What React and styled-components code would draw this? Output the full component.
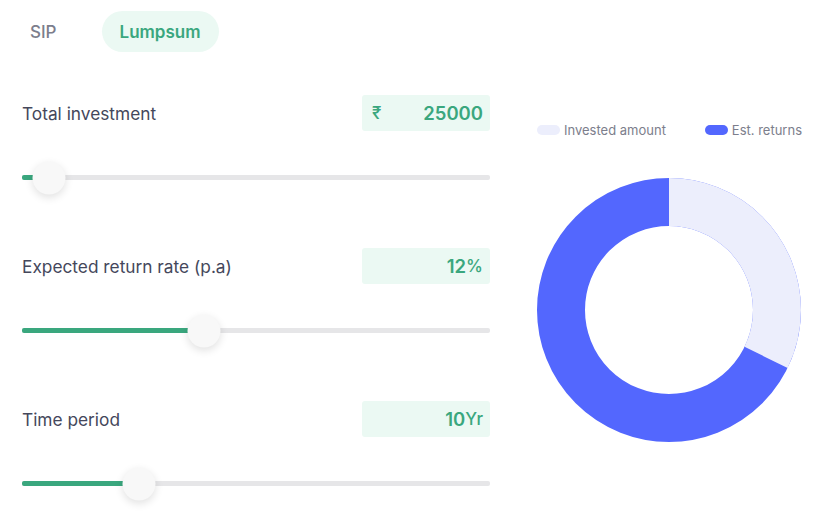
import React from 'react';
import styled, { createGlobalStyle } from 'styled-components';

const GlobalStyle = createGlobalStyle`
    body{
        margin: 0;
        background: #ffffff;
        font-family: Inter, "Open Sans", sans-serif;
    }
`;

const Page = styled.div`
    display: flex;
    gap: 47px;
    padding: 11px 0 0 22px;
    width: 820px;
    height: 531px;
    box-sizing: border-box;
`;

const LeftCol = styled.div`
    width: 468px;
    display: flex;
    flex-direction: column;
`;

const Tabs = styled.div`
    display: flex;
    align-items: center;
    gap: 37px;
    margin-bottom: 43px;
`;

const Tab = styled.button`
    height: 41px;
    border: none;
    border-radius: 21px;
    padding: 0 ${(p) => (p.active ? '18px' : '8px')};
    background: ${(p) => (p.active ? '#ebf9f3' : 'transparent')};
    color: ${(p) => (p.active ? '#3aa77e' : '#7c7e8c')};
    font-family: Inter, "Open Sans", sans-serif;
    font-size: 17px;
    font-weight: ${(p) => (p.active ? 600 : 500)};
    cursor: pointer;
`;

const Field = styled.div`
    display: flex;
    flex-direction: column;
    margin-bottom: 68px;
`;

const FieldHead = styled.div`
    display: flex;
    justify-content: space-between;
    align-items: center;
`;

const Label = styled.span`
    font-size: 17.3px;
    color: #44475b;
`;

const ValueBox = styled.div`
    width: 128px;
    height: 36px;
    box-sizing: border-box;
    background: #ebf9f3;
    border-radius: 3px;
    display: flex;
    align-items: center;
    justify-content: space-between;
    padding: 0 7px 0 10px;
    color: #3aa77e;
`;

const Prefix = styled.span`
    font-size: 17px;
    font-weight: 500;
`;

const Amount = styled.span`
    margin-left: auto;
    font-size: 18.5px;
    font-weight: 600;
`;

const Unit = styled.span`
    font-size: 17px;
    font-weight: 500;
`;

const Track = styled.div`
    position: relative;
    margin-top: 44px;
    height: 5px;
    background: #e6e6e8;
    border-radius: 2px;
`;

const Fill = styled.div`
    height: 100%;
    background: #3aa77e;
    border-radius: 2px 0 0 2px;
`;

const Thumb = styled.div`
    position: absolute;
    top: 50%;
    width: 33px;
    height: 33px;
    border-radius: 50%;
    background: #f8f8f8;
    box-shadow: 0 3px 8px rgba(0, 0, 0, 0.12);
    transform: translate(-50%, -50%);
`;

const RightCol = styled.div`
    width: 265px;
    display: flex;
    flex-direction: column;
    padding-top: 111px;
`;

const Legend = styled.div`
    display: flex;
    justify-content: space-between;
    align-items: center;
    margin-bottom: 40px;
`;

const LegendItem = styled.div`
    display: flex;
    align-items: center;
    gap: 4px;
    font-size: 13px;
    color: #7c7e8c;
`;

const Swatch = styled.span`
    width: 23px;
    height: 10px;
    border-radius: 5px;
    background: ${(p) => p.color};
`;

const Slider = ({ pct }) => (
    <Track>
        <Fill style={{ width: pct + '%' }} />
        <Thumb style={{ left: pct + '%' }} />
    </Track>
);

const Donut = ({ invested, total }) => {
    const r = 108;
    const c = 2 * Math.PI * r;
    const part = (invested / total) * c;
    return (
        <svg width="264" height="264" viewBox="0 0 264 264">
            <circle cx="132" cy="132" r={r} fill="none" stroke="#5367fe" strokeWidth="48" />
            <circle
                cx="132"
                cy="132"
                r={r}
                fill="none"
                stroke="#eceefc"
                strokeWidth="48"
                strokeDasharray={`${part} ${c}`}
                transform="rotate(-90 132 132)"
            />
        </svg>
    );
};

const App = () => {
    const invested = 25000;
    const total = invested * Math.pow(1.12, 10);

    return (
        <>
            <GlobalStyle />
            <Page>
                <LeftCol>
                    <Tabs>
                        <Tab>SIP</Tab>
                        <Tab active>Lumpsum</Tab>
                    </Tabs>

                    <Field>
                        <FieldHead>
                            <Label>Total investment</Label>
                            <ValueBox>
                                <Prefix>₹</Prefix>
                                <Amount>25000</Amount>
                            </ValueBox>
                        </FieldHead>
                        <Slider pct={5.8} />
                    </Field>

                    <Field>
                        <FieldHead>
                            <Label>Expected return rate (p.a)</Label>
                            <ValueBox>
                                <Amount>12</Amount>
                                <Unit>%</Unit>
                            </ValueBox>
                        </FieldHead>
                        <Slider pct={38.9} />
                    </Field>

                    <Field>
                        <FieldHead>
                            <Label>Time period</Label>
                            <ValueBox>
                                <Amount>10</Amount>
                                <Unit>Yr</Unit>
                            </ValueBox>
                        </FieldHead>
                        <Slider pct={25} />
                    </Field>
                </LeftCol>

                <RightCol>
                    <Legend>
                        <LegendItem>
                            <Swatch color="#eceefc" />
                            Invested amount
                        </LegendItem>
                        <LegendItem>
                            <Swatch color="#5367fe" />
                            Est. returns
                        </LegendItem>
                    </Legend>
                    <Donut invested={invested} total={total} />
                </RightCol>
            </Page>
        </>
    );
};

export default App;
